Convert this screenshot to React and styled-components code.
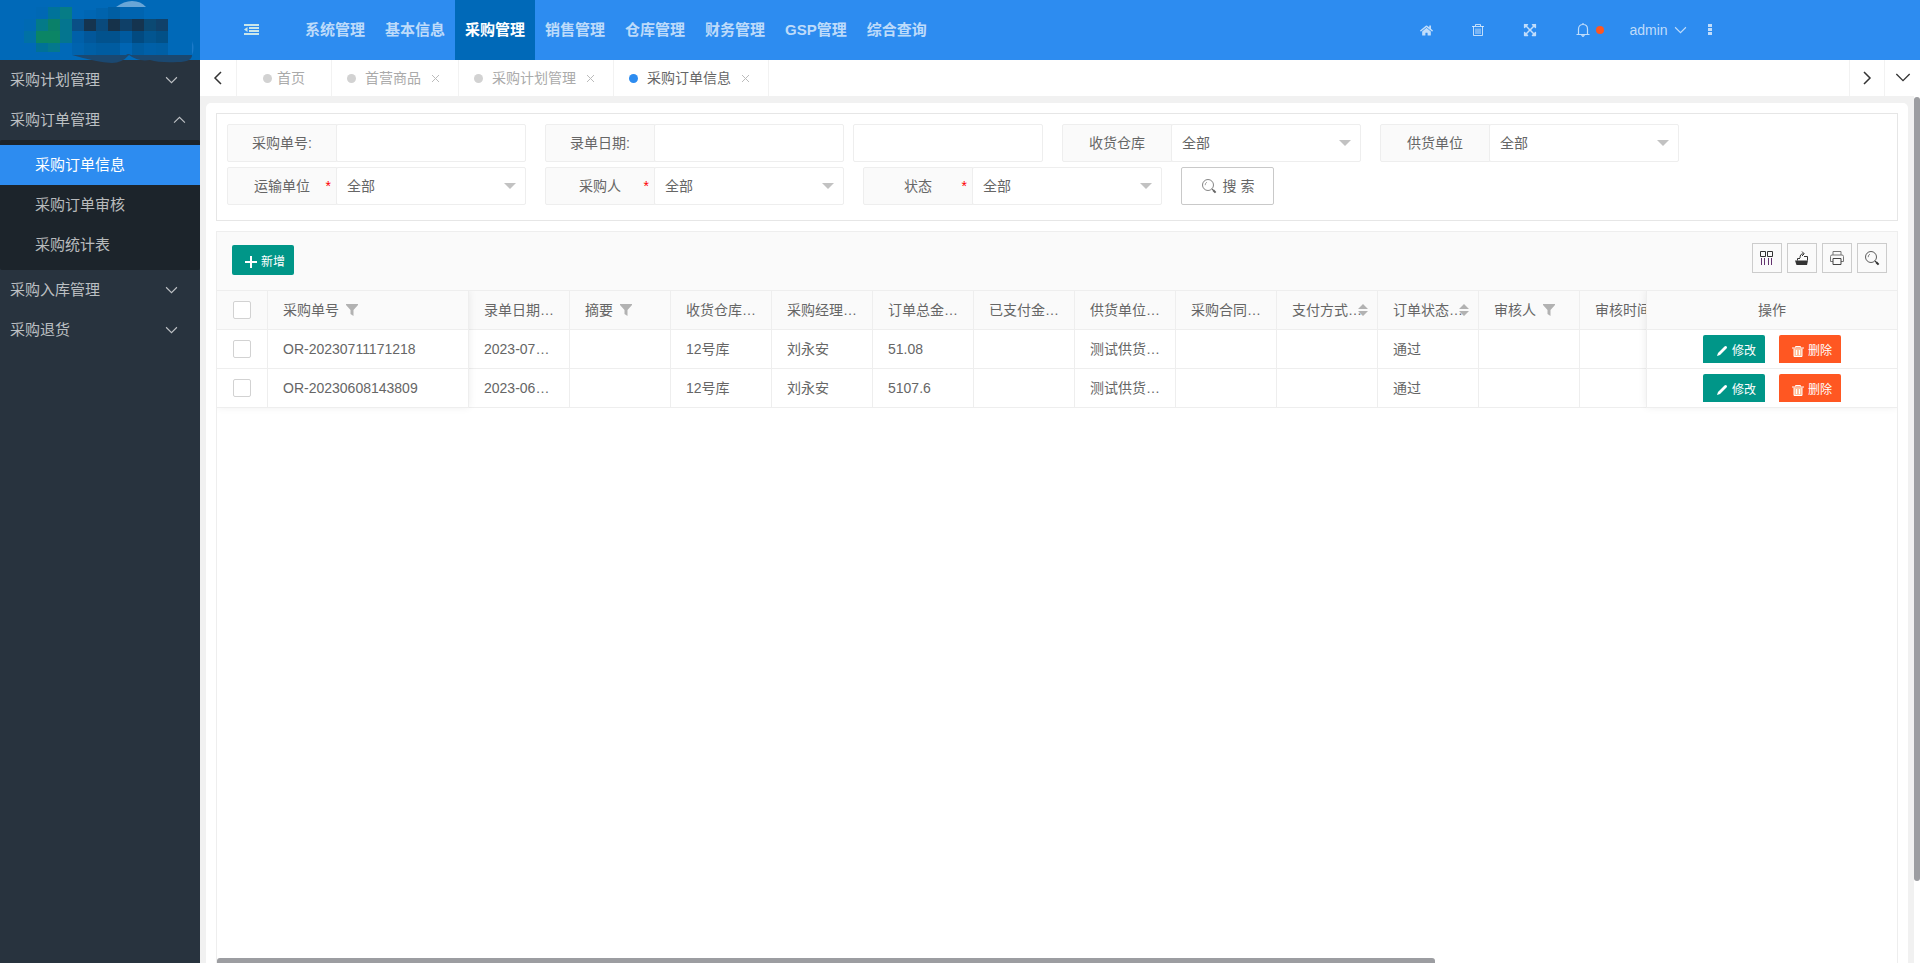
import { useState } from 'react';
import { styled, createGlobalStyle } from 'styled-components';
import { FaHome, FaExpandArrowsAlt } from 'react-icons/fa';

const GlobalStyle = createGlobalStyle`
    * {
        box-sizing: border-box;
    }
    body {
        margin: 0;
        background-color: #fff;
        color: #666;
        font-family: 'Liberation Sans', Arial, 'Noto Sans CJK SC', sans-serif;
        font-size: 14px;
        line-height: 24px;
    }
    a {
        color: inherit;
        text-decoration: none;
    }
    button, input, select {
        font: inherit;
        color: inherit;
        margin: 0;
    }
    button {
        cursor: pointer;
    }
    svg {
        display: block;
        flex: none;
    }
`;

const Page = styled.div`
    display: flex;
    height: 100vh;
    overflow: hidden;
`;

const Sidebar = styled.aside`
    flex: none;
    width: 200px;
    background-color: #28333e;
    color: rgba(255, 255, 255, 0.7);
    font-size: 15px;
`;

const Logo = styled.a`
    display: block;
    height: 60px;
    background-color: #0069b8;

    svg {
        overflow: visible;
    }
`;

const MenuItem = styled.button`
    display: flex;
    justify-content: space-between;
    align-items: center;
    width: 100%;
    height: 40px;
    padding: 0 ${({ $open }) => ($open ? '14px' : '22px')} 0 10px;
    border: none;
    background: none;
    text-align: left;
`;

const SubMenu = styled.div`
    padding: 5px 0;
    border-radius: 2px;
    background-color: #1c242b;
`;

const SubMenuItem = styled.a`
    display: block;
    height: 40px;
    padding-left: 35px;
    line-height: 40px;
    background-color: ${({ $active }) => ($active ? '#2d8cf0' : 'transparent')};
    color: ${({ $active }) => ($active ? '#fff' : 'inherit')};
`;

const Main = styled.div`
    display: flex;
    flex-direction: column;
    flex: 1;
    min-width: 0;
`;

const Header = styled.header`
    display: flex;
    align-items: center;
    flex: none;
    height: 60px;
    padding: 0 192px 0 25px;
    background-color: #2d8cf0;
    color: rgba(255, 255, 255, 0.7);
`;

const HeaderButton = styled.button`
    display: flex;
    justify-content: center;
    align-items: center;
    gap: 6px;
    width: ${({ $width }) => $width || '52px'};
    height: 60px;
    padding: 0;
    border: none;
    background: none;
`;

const TopNav = styled.nav`
    display: flex;
    flex: 1;
    margin-left: 18px;
    font-size: 15px;
    font-weight: bold;
`;

const TopNavItem = styled.a`
    padding: 0 10px;
    line-height: 60px;
    background-color: ${({ $active }) => ($active ? '#0069b8' : 'transparent')};
    color: ${({ $active }) => ($active ? '#fff' : 'inherit')};
`;

const Dot = styled.span`
    flex: none;
    width: ${({ $size }) => $size || '9px'};
    height: ${({ $size }) => $size || '9px'};
    border-radius: 50%;
    background-color: ${({ $color }) => $color};
`;

const HeaderTools = styled.div`
    display: flex;
    align-items: center;
`;

const TabBar = styled.div`
    display: flex;
    flex: none;
    height: 36px;
    background-color: #fff;
`;

const TabArrow = styled.button`
    display: flex;
    justify-content: center;
    align-items: center;
    width: ${({ $width }) => $width || '35px'};
    padding: 0;
    border: none;
    border-${({ $side }) => $side}: 1px solid #f2f2f2;
    background: none;
    color: #333;
`;

const TabList = styled.div`
    display: flex;
    flex: 1;
`;

const Tab = styled.div`
    display: flex;
    align-items: center;
    gap: ${({ $home }) => ($home ? '5px' : '9px')};
    padding: 0 ${({ $home }) => ($home ? '26px' : '15px')};
    border-right: 1px solid #f2f2f2;
    color: ${({ $active }) => ($active ? '#666' : '#aaa')};
`;

const TabClose = styled.button`
    padding: 0 3px 0 1px;
    border: none;
    background: none;
    color: #bbb;
`;

const Body = styled.div`
    display: flex;
    flex: 1;
    min-height: 0;
`;

const Content = styled.main`
    display: flex;
    flex: 1;
    min-width: 0;
    padding: 7px 6px 0;
    background-color: #f1f1f1;
`;

const Card = styled.div`
    display: flex;
    flex-direction: column;
    flex: 1;
    min-width: 0;
    padding: 10px 10px 0;
    border-radius: 5px 5px 0 0;
    background-color: #fff;
`;

const VerticalBar = styled.div`
    flex: none;
    width: 6px;
    padding-top: 1px;
    background-color: #fff;
`;

const VerticalThumb = styled.div`
    height: 90.5%;
    border-radius: 3px;
    background-color: #9c9da1;
`;

const SearchPanel = styled.form`
    display: flex;
    flex-direction: column;
    gap: 5px;
    margin-bottom: 10px;
    padding: 10px 10px 15px;
    border: 1px solid #e6e6e6;
`;

const SearchRow = styled.div`
    display: flex;
    gap: 19px;
`;

const Field = styled.div`
    display: flex;
`;

const FieldLabel = styled.label`
    display: grid;
    grid-template-columns: 1fr auto 1fr;
    align-items: center;
    width: 110px;
    height: 38px;
    border: 1px solid #eee;
    border-radius: 2px 0 0 2px;
    background-color: #fafafa;
`;

const FieldName = styled.span`
    grid-column: 2;
`;

const Required = styled.span`
    justify-self: end;
    padding-right: 5px;
    color: #f00;
`;

const TextInput = styled.input`
    width: 190px;
    height: 38px;
    margin-left: ${({ $apart }) => ($apart ? '9px' : '-1px')};
    padding: 0 10px;
    border: 1px solid #eee;
    border-radius: 2px;
    background-color: #fff;
    outline: none;
`;

const SelectBox = styled.div`
    position: relative;
    width: 190px;
    margin-left: -1px;

    &::after {
        content: '';
        position: absolute;
        top: 16px;
        right: 10px;
        border: 6px solid transparent;
        border-top-color: #c2c2c2;
        border-bottom: none;
        pointer-events: none;
    }
`;

const Select = styled.select`
    width: 100%;
    height: 38px;
    padding: 0 10px;
    border: 1px solid #eee;
    border-radius: 2px;
    background-color: #fff;
    appearance: none;
    outline: none;
`;

const SearchButton = styled.button`
    display: flex;
    justify-content: center;
    align-items: center;
    gap: 6px;
    width: 93px;
    height: 38px;
    padding: 0;
    border: 1px solid #c9c9c9;
    border-radius: 2px;
    background-color: #fff;
`;

const TableView = styled.section`
    display: flex;
    flex-direction: column;
    flex: 1;
    border: 1px solid #eee;
    border-bottom: none;
`;

const Toolbar = styled.div`
    display: flex;
    justify-content: space-between;
    align-items: flex-start;
    height: 59px;
    padding: 11px 10px 0 15px;
    border-bottom: 1px solid #eee;
    background-color: #fafafa;
`;

const ToolbarGroup = styled.div`
    display: flex;
    gap: 5px;
`;

const ActionButton = styled.button`
    display: flex;
    align-items: center;
    gap: 4px;
    width: 62px;
    height: ${({ $height }) => $height || '28px'};
    padding: 3px 0 0 13px;
    border: none;
    border-radius: 2px 2px 0 0;
    background-color: ${({ $danger }) => ($danger ? '#ff5722' : '#009688')};
    color: #fff;
    font-size: 12px;
`;

const AddButton = styled(ActionButton)`
    margin-top: 2px;
    border-radius: 2px;
`;

const ToolButton = styled.button`
    display: flex;
    justify-content: center;
    align-items: center;
    width: 30px;
    height: 30px;
    padding: 0;
    border: 1px solid #ccc;
    background: none;
    color: #333;
`;

const Tables = styled.div`
    display: flex;
    align-items: flex-start;
    flex: 1;
    overflow: hidden;
`;

const ScrollArea = styled.div`
    flex: 1;
    min-width: 0;
    overflow: hidden;
`;

const Table = styled.table`
    border-collapse: separate;
    border-spacing: 0;
    table-layout: fixed;
    width: ${({ $width }) => $width};
    background-color: #fff;
`;

const FixedLeft = styled(Table)`
    position: relative;
    box-shadow: 0 -1px 8px rgba(0, 0, 0, 0.08);
`;

const FixedRight = styled(Table)`
    position: relative;
    border-left: 1px solid #eee;
    box-shadow: 0 -1px 8px rgba(0, 0, 0, 0.08);
`;

const Cell = styled.td`
    height: 39px;
    padding: 0 0 0 ${({ $pad }) => $pad || '15px'};
    border-right: 1px solid #eee;
    border-bottom: 1px solid #eee;
    white-space: nowrap;
    overflow: hidden;
`;

const HeadCell = styled(Cell)`
    background-color: #fafafa;
    font-weight: normal;
    text-align: left;
`;

const ActionCell = styled(Cell)`
    padding: 0;
    border-right: none;
`;

const ActionHeadCell = styled(HeadCell)`
    padding: 0;
    border-right: none;
    text-align: center;
`;

const HeadTitle = styled.div`
    display: flex;
    align-items: center;
`;

const FilterIcon = styled.svg`
    margin-left: 7px;
`;

const SortIcon = styled.svg`
    margin-left: -4px;
`;

const RowActions = styled.div`
    display: flex;
    justify-content: center;
    gap: 14px;
`;

const Checkbox = styled.input`
    display: block;
    width: 18px;
    height: 18px;
    margin: 0;
    border: 1px solid #d2d2d2;
    border-radius: 2px;
    background-color: #fff;
    appearance: none;

    &:checked {
        background-color: #009688;
    }
`;

const HorizontalThumb = styled.div`
    width: 72.5%;
    height: 5px;
    border-radius: 3px 3px 0 0;
    background-color: #9c9da1;
`;

const topMenus = [
    '系统管理',
    '基本信息',
    '采购管理',
    '销售管理',
    '仓库管理',
    '财务管理',
    'GSP管理',
    '综合查询',
];

const sideMenus = [
    { name: '采购计划管理' },
    {
        name: '采购订单管理',
        open: true,
        children: ['采购订单信息', '采购订单审核', '采购统计表'],
    },
    { name: '采购入库管理' },
    { name: '采购退货' },
];

const tabs = ['首营商品', '采购计划管理', '采购订单信息'];

const columns = [
    { title: '录单日期…', key: 'date' },
    { title: '摘要', key: 'summary', icon: 'filter' },
    { title: '收货仓库…', key: 'store' },
    { title: '采购经理…', key: 'manager' },
    { title: '订单总金…', key: 'total' },
    { title: '已支付金…', key: 'paid' },
    { title: '供货单位…', key: 'supplier' },
    { title: '采购合同…', key: 'contract' },
    { title: '支付方式…', key: 'payment', icon: 'sort' },
    { title: '订单状态…', key: 'status', icon: 'sort' },
    { title: '审核人', key: 'auditor', icon: 'filter' },
    { title: '审核时间', key: 'auditTime' },
];

const orders = [
    {
        id: 'OR-20230711171218',
        date: '2023-07…',
        store: '12号库',
        manager: '刘永安',
        total: '51.08',
        supplier: '测试供货…',
        status: '通过',
    },
    {
        id: 'OR-20230608143809',
        date: '2023-06…',
        store: '12号库',
        manager: '刘永安',
        total: '5107.6',
        supplier: '测试供货…',
        status: '通过',
    },
];

// [x, y, color] of each 12px tile in the logo
const logoTiles = [
    [36, 7, '#0068b4'],
    [48, 7, '#00739a'],
    [60, 7, '#067c86'],
    [84, 10, '#0066b3'],
    [96, 8, '#0063ad'],
    [108, 7, '#005ea3'],
    [120, 7, '#0064b0'],
    [132, 7, '#0064b0'],
    [24, 19, '#006ab3'],
    [36, 19, '#047a88'],
    [48, 19, '#0a8069'],
    [60, 19, '#04758f'],
    [72, 19, '#0a4f86'],
    [84, 19, '#15344f'],
    [96, 19, '#0a4a7c'],
    [108, 19, '#16324a'],
    [120, 19, '#0f4068'],
    [132, 19, '#15344f'],
    [144, 19, '#0b4973'],
    [156, 19, '#10416a'],
    [24, 31, '#0071a5'],
    [36, 31, '#0b8565'],
    [48, 31, '#0b8565'],
    [60, 31, '#04758f'],
    [72, 31, '#0060a9'],
    [84, 31, '#02579a'],
    [96, 31, '#02528d'],
    [108, 31, '#02528d'],
    [120, 31, '#005a9f'],
    [132, 31, '#024a80'],
    [144, 31, '#025590'],
    [156, 31, '#025087'],
    [36, 43, '#007197'],
    [48, 43, '#04788d'],
    [72, 43, '#0063ae'],
    [84, 43, '#005fa5'],
    [96, 43, '#005ca0'],
    [108, 43, '#005ca0'],
    [120, 43, '#0065b3'],
    [132, 43, '#005ca0'],
    [144, 43, '#0060a8'],
    [156, 43, '#005fa5'],
];

function LogoMark() {
    return (
        <svg width="200" height="60" viewBox="0 0 200 60">
            {logoTiles.map(([x, y, color]) => (
                <rect
                    key={`${x}-${y}`}
                    x={x}
                    y={y}
                    width="12"
                    height={y === 43 && x < 72 ? 9 : y < 19 ? 19 - y : 12}
                    fill={color}
                />
            ))}
            <path d="M116 7Q124 1 132 1Q141 1 146 7Z" fill="#69a6d7" />
            <path
                d="M72 55H126Q128 53 131 55H192Q192 62 178 62Q160 63 150 60Q138 62 129 55Q122 63 112 63Q96 62 72 55Z"
                fill="#1b4870"
            />
            <path d="M192 41Q195 48 192 55Z" fill="#1b7ac9" />
        </svg>
    );
}

function Chevron({ to = 'down', width = 13, stroke = 1 }) {
    const points = {
        down: '1,3 6,8 11,3',
        up: '1,8 6,3 11,8',
        left: '9,0 3,6 9,12',
        right: '3,0 9,6 3,12',
    };
    return (
        <svg
            width={width}
            height={width}
            viewBox="0 0 12 12"
            fill="none"
            stroke="currentColor"
            strokeWidth={stroke}
            overflow="visible"
        >
            <polyline points={points[to]} />
        </svg>
    );
}

function SearchIcon() {
    return (
        <svg
            width="16"
            height="16"
            viewBox="0 0 16 16"
            fill="none"
            stroke="currentColor"
        >
            <circle cx="7" cy="7" r="5.5" strokeWidth="0.8" />
            <path d="M4.2 7.2A3 3 0 0 1 6 4.2" strokeWidth="0.6" />
            <path d="M10.8 10.8L12 12" />
            <path d="M12 12L14.6 14.6" strokeWidth="2" />
        </svg>
    );
}

function CloseIcon() {
    return (
        <svg width="9" height="9" viewBox="0 0 9 9" stroke="currentColor">
            <path d="M1 1L8 8M8 1L1 8" />
        </svg>
    );
}

function TrashOutline() {
    return (
        <svg
            width="14"
            height="14"
            viewBox="0 0 14 14"
            fill="none"
            stroke="currentColor"
        >
            <path d="M1 3.5H13M4.5 3V1.5H9.5V3M2.5 3.5V12.5H11.5V3.5M5 5.5V11M7 5.5V11M9 5.5V11" />
        </svg>
    );
}

function BellIcon() {
    return (
        <svg
            width="14"
            height="14"
            viewBox="0 0 14 14"
            fill="none"
            stroke="currentColor"
            strokeWidth="1.2"
        >
            <path d="M2.5 11V6C2.5 3 4.5 1.5 7 1.5S11.5 3 11.5 6V11M0.5 11.5H13.5M7 0V1.5M5.5 12L7 13.5L8.5 12" />
        </svg>
    );
}

function FoldIcon() {
    return (
        <svg width="15" height="12" viewBox="0 0 15 12" fill="#c9e6ea">
            <path d="M0 0H15V2H0ZM5 3H15V5H5ZM5 6H15V8H5ZM0 9H15V11H0ZM0 5.5L3.5 3V8Z" />
        </svg>
    );
}

function ColumnsIcon() {
    return (
        <svg
            width="14"
            height="14"
            viewBox="0 0 14 14"
            fill="none"
            stroke="currentColor"
        >
            <path d="M0.5 0.5H5.5V5.5H0.5ZM7.5 0.5H12.5V5.5H7.5Z" />
            <path d="M1.5 7V14M4.5 7V14M8.5 7V14M11.5 7V14" stroke="#63336f" />
        </svg>
    );
}

function ExportIcon() {
    return (
        <svg
            width="14"
            height="14"
            viewBox="0 0 14 14"
            fill="none"
            stroke="currentColor"
        >
            <path d="M0 9.5H13L12 14H1.5Z" fill="currentColor" stroke="none" />
            <path d="M2.5 9.5V7.5H5M9 5.5H12.5V9.5" />
            <path d="M5 7C5 4 6 2.8 8.5 2.8M7 0.5L9.2 2.8L7 5" />
        </svg>
    );
}

function PrintIcon() {
    return (
        <svg
            width="14"
            height="14"
            viewBox="0 0 14 14"
            fill="none"
            stroke="#777"
        >
            <path d="M3 4V0.5H11V4M3 10.5H0.5V5.5Q0.5 4 2 4H12Q13.5 4 13.5 5.5V10.5H11" />
            <path d="M3 7.5H11V13.5H3Z" stroke="#444" />
        </svg>
    );
}

function PlusIcon() {
    return (
        <svg width="12" height="12" viewBox="0 0 12 12" fill="currentColor">
            <path d="M5 0H7V5H12V7H7V12H5V7H0V5H5Z" />
        </svg>
    );
}

function PencilIcon() {
    return (
        <svg width="12" height="12" viewBox="0 0 12 12" fill="currentColor">
            <path d="M1 11L2 8L8.5 1.5Q9.5 0.5 10.7 1.5Q11.5 2.5 10.5 3.5L4 10Z" />
        </svg>
    );
}

function TrashFilled() {
    return (
        <svg
            width="12"
            height="12"
            viewBox="0 0 12 12"
            fill="none"
            stroke="currentColor"
        >
            <path d="M0 3H12M3.5 2.5V1.5H8.5V2.5" />
            <path
                d="M2 3.5V11.5H10V3.5M4.5 5V10M7.5 5V10"
                fill="#ffc09a"
            />
        </svg>
    );
}

function HeadContent({ title, icon }) {
    return (
        <HeadTitle>
            {title}
            {icon === 'filter' && (
                <FilterIcon width="12" height="12" viewBox="0 0 12 12">
                    <path d="M0 0H12V1L7.5 6V12L4.5 10V6L0 1Z" fill="#b2b2b2" />
                </FilterIcon>
            )}
            {icon === 'sort' && (
                <SortIcon width="10" height="12" viewBox="0 0 10 12">
                    <path d="M0 5L5 0L10 5ZM0 7H10L5 12Z" fill="#b2b2b2" />
                </SortIcon>
            )}
        </HeadTitle>
    );
}

function SelectField({ id, label, required }) {
    return (
        <Field>
            <FieldLabel htmlFor={id}>
                <FieldName>{label}</FieldName>
                {required && <Required>*</Required>}
            </FieldLabel>
            <SelectBox>
                <Select id={id}>
                    <option>全部</option>
                </Select>
            </SelectBox>
        </Field>
    );
}

export default function App() {
    const [orderNo, setOrderNo] = useState('');
    const [dates, setDates] = useState({ start: '', end: '' });

    return (
        <Page>
            <GlobalStyle />
            <Sidebar>
                <Logo href="#" aria-label="首页">
                    <LogoMark />
                </Logo>
                {sideMenus.map((menu) => (
                    <div key={menu.name}>
                        <MenuItem type="button" $open={menu.open}>
                            {menu.name}
                            <Chevron to={menu.open ? 'up' : 'down'} />
                        </MenuItem>
                        {menu.children && (
                            <SubMenu>
                                {menu.children.map((name, index) => (
                                    <SubMenuItem
                                        key={name}
                                        href="#"
                                        $active={index === 0}
                                    >
                                        {name}
                                    </SubMenuItem>
                                ))}
                            </SubMenu>
                        )}
                    </div>
                ))}
            </Sidebar>
            <Main>
                <Header>
                    <HeaderButton type="button" aria-label="收起菜单">
                        <FoldIcon />
                    </HeaderButton>
                    <TopNav>
                        {topMenus.map((name) => (
                            <TopNavItem
                                key={name}
                                href="#"
                                $active={name === '采购管理'}
                            >
                                {name}
                            </TopNavItem>
                        ))}
                    </TopNav>
                    <HeaderTools>
                        <HeaderButton type="button" aria-label="主页">
                            <FaHome size={13} />
                        </HeaderButton>
                        <HeaderButton type="button" aria-label="清理">
                            <TrashOutline />
                        </HeaderButton>
                        <HeaderButton type="button" aria-label="全屏">
                            <FaExpandArrowsAlt size={14} />
                        </HeaderButton>
                        <HeaderButton type="button" aria-label="消息" $width="68px">
                            <BellIcon />
                            <Dot $size="8px" $color="#ff5722" />
                        </HeaderButton>
                        <HeaderButton type="button" $width="68px">
                            admin
                            <Chevron />
                        </HeaderButton>
                        <HeaderButton type="button" aria-label="更多" $width="36px">
                            <svg width="4" height="12" fill="currentColor">
                                <path d="M0 0H4V3H0ZM0 4H4V7H0ZM0 8H4V11H0Z" />
                            </svg>
                        </HeaderButton>
                    </HeaderTools>
                </Header>
                <TabBar>
                    <TabArrow
                        type="button"
                        aria-label="向左"
                        $side="right"
                        $width="37px"
                    >
                        <Chevron to="left" width={12} stroke={1.5} />
                    </TabArrow>
                    <TabList>
                        <Tab $home>
                            <Dot $color="#d2d2d2" />
                            <a href="#">首页</a>
                        </Tab>
                        {tabs.map((name) => {
                            const active = name === '采购订单信息';
                            return (
                                <Tab key={name} $active={active}>
                                    <Dot $color={active ? '#2d8cf0' : '#d2d2d2'} />
                                    <a href="#">{name}</a>
                                    <TabClose type="button" aria-label="关闭">
                                        <CloseIcon />
                                    </TabClose>
                                </Tab>
                            );
                        })}
                    </TabList>
                    <TabArrow type="button" aria-label="向右" $side="left">
                        <Chevron to="right" width={12} stroke={1.5} />
                    </TabArrow>
                    <TabArrow
                        type="button"
                        aria-label="展开"
                        $side="left"
                        $width="36px"
                    >
                        <Chevron width={16} />
                    </TabArrow>
                </TabBar>
                <Body>
                    <Content>
                        <Card>
                            <SearchPanel>
                                <SearchRow>
                                    <Field>
                                        <FieldLabel htmlFor="orderNo">
                                            <FieldName>采购单号:</FieldName>
                                        </FieldLabel>
                                        <TextInput
                                            id="orderNo"
                                            type="text"
                                            value={orderNo}
                                            onChange={(event) =>
                                                setOrderNo(event.currentTarget.value)
                                            }
                                        />
                                    </Field>
                                    <Field>
                                        <FieldLabel htmlFor="startDate">
                                            <FieldName>录单日期:</FieldName>
                                        </FieldLabel>
                                        <TextInput
                                            id="startDate"
                                            type="text"
                                            value={dates.start}
                                            onChange={(event) =>
                                                setDates({
                                                    ...dates,
                                                    start: event.currentTarget.value,
                                                })
                                            }
                                        />
                                        <TextInput
                                            $apart
                                            type="text"
                                            aria-label="结束日期"
                                            value={dates.end}
                                            onChange={(event) =>
                                                setDates({
                                                    ...dates,
                                                    end: event.currentTarget.value,
                                                })
                                            }
                                        />
                                    </Field>
                                    <SelectField id="store" label="收货仓库" />
                                    <SelectField id="supplier" label="供货单位" />
                                </SearchRow>
                                <SearchRow>
                                    <SelectField id="carrier" label="运输单位" required />
                                    <SelectField id="buyer" label="采购人" required />
                                    <SelectField id="status" label="状态" required />
                                    <SearchButton type="button">
                                        <SearchIcon />
                                        搜 索
                                    </SearchButton>
                                </SearchRow>
                            </SearchPanel>
                            <TableView>
                                <Toolbar>
                                    <AddButton type="button" $height="30px">
                                        <PlusIcon />
                                        新增
                                    </AddButton>
                                    <ToolbarGroup>
                                        <ToolButton type="button" aria-label="筛选列">
                                            <ColumnsIcon />
                                        </ToolButton>
                                        <ToolButton type="button" aria-label="导出">
                                            <ExportIcon />
                                        </ToolButton>
                                        <ToolButton type="button" aria-label="打印">
                                            <PrintIcon />
                                        </ToolButton>
                                        <ToolButton type="button" aria-label="搜索">
                                            <SearchIcon />
                                        </ToolButton>
                                    </ToolbarGroup>
                                </Toolbar>
                                <Tables>
                                    <FixedLeft $width="252px">
                                        <colgroup>
                                            <col width="51" />
                                            <col width="201" />
                                        </colgroup>
                                        <thead>
                                            <tr>
                                                <HeadCell as="th" $pad="16px">
                                                    <Checkbox type="checkbox" aria-label="全选" />
                                                </HeadCell>
                                                <HeadCell as="th">
                                                    <HeadContent title="采购单号" icon="filter" />
                                                </HeadCell>
                                            </tr>
                                        </thead>
                                        <tbody>
                                            {orders.map((order) => (
                                                <tr key={order.id}>
                                                    <Cell $pad="16px">
                                                        <Checkbox
                                                            type="checkbox"
                                                            aria-label={order.id}
                                                        />
                                                    </Cell>
                                                    <Cell>{order.id}</Cell>
                                                </tr>
                                            ))}
                                        </tbody>
                                    </FixedLeft>
                                    <ScrollArea>
                                        <Table $width="1212px">
                                            <thead>
                                                <tr>
                                                    {columns.map(({ key, title, icon }) => (
                                                        <HeadCell as="th" key={key}>
                                                            <HeadContent title={title} icon={icon} />
                                                        </HeadCell>
                                                    ))}
                                                </tr>
                                            </thead>
                                            <tbody>
                                                {orders.map((order) => (
                                                    <tr key={order.id}>
                                                        {columns.map(({ key }) => (
                                                            <Cell key={key}>{order[key]}</Cell>
                                                        ))}
                                                    </tr>
                                                ))}
                                            </tbody>
                                        </Table>
                                    </ScrollArea>
                                    <FixedRight $width="251px">
                                        <thead>
                                            <tr>
                                                <ActionHeadCell as="th">操作</ActionHeadCell>
                                            </tr>
                                        </thead>
                                        <tbody>
                                            {orders.map((order) => (
                                                <tr key={order.id}>
                                                    <ActionCell>
                                                        <RowActions>
                                                            <ActionButton type="button">
                                                                <PencilIcon />
                                                                修改
                                                            </ActionButton>
                                                            <ActionButton type="button" $danger>
                                                                <TrashFilled />
                                                                删除
                                                            </ActionButton>
                                                        </RowActions>
                                                    </ActionCell>
                                                </tr>
                                            ))}
                                        </tbody>
                                    </FixedRight>
                                </Tables>
                                <HorizontalThumb />
                            </TableView>
                        </Card>
                    </Content>
                    <VerticalBar>
                        <VerticalThumb />
                    </VerticalBar>
                </Body>
            </Main>
        </Page>
    );
}
